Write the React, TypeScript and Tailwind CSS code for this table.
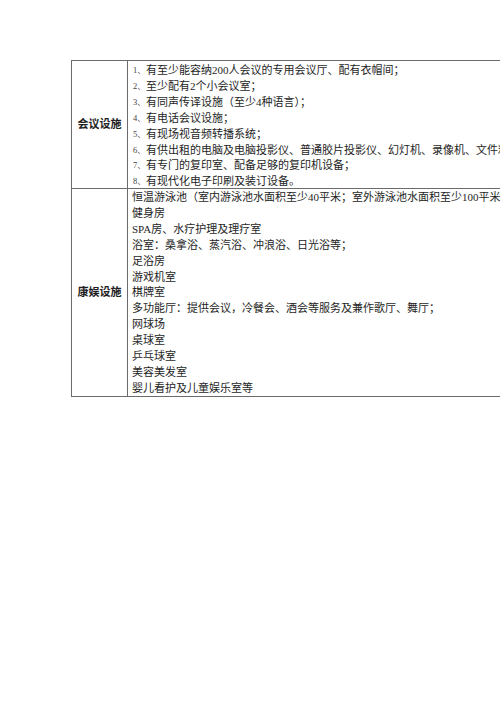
import React from 'react';

const meeting = [
  '有至少能容纳200人会议的专用会议厅、配有衣帽间；',
  '至少配有2个小会议室；',
  '有同声传译设施（至少4种语言）；',
  '有电话会议设施；',
  '有现场视音频转播系统；',
  '有供出租的电脑及电脑投影仪、普通胶片投影仪、幻灯机、录像机、文件粘贴设备；',
  '有专门的复印室、配备足够的复印机设备；',
  '有现代化电子印刷及装订设备。',
];

const leisure = [
  '恒温游泳池（室内游泳池水面积至少40平米；室外游泳池水面积至少100平米）',
  '健身房',
  'SPA房、水疗护理及理疗室',
  '浴室：桑拿浴、蒸汽浴、冲浪浴、日光浴等；',
  '足浴房',
  '游戏机室',
  '棋牌室',
  '多功能厅：提供会议，冷餐会、酒会等服务及兼作歌厅、舞厅；',
  '网球场',
  '桌球室',
  '乒乓球室',
  '美容美发室',
  '婴儿看护及儿童娱乐室等',
];

const font = { fontFamily: '"Liberation Serif", "Noto Sans CJK SC", serif' };

export default function App(): React.ReactNode {
  return (
    <div className="w-[500px] h-[708px] overflow-hidden bg-white pt-[60px] pl-[71px]" style={font}>
      <div className="w-[700px] border-t border-l border-b border-[#6b6b6b] text-[#1e1e1e]">
        {/* 会议设施 */}
        <div className="flex h-[128px] border-b border-[#6b6b6b]">
          <div className="w-[56px] shrink-0 border-r border-[#6b6b6b] flex items-center justify-center text-[11px] font-bold">
            会议设施
          </div>
          <div className="pl-[5px] pt-[2px] text-[11px] leading-[15.9px] whitespace-nowrap">
            {meeting.map((t, i) => (
              <div key={i} className="flex">
                <span className="w-[13px] text-[8.5px] text-[#444]">{i + 1}、</span>
                <span>{t}</span>
              </div>
            ))}
          </div>
        </div>
        {/* 康娱设施 */}
        <div className="flex h-[207px]">
          <div className="w-[56px] shrink-0 border-r border-[#6b6b6b] flex items-center justify-center text-[11px] font-bold">
            康娱设施
          </div>
          <div className="pl-[4px] pt-[1px] text-[11px] leading-[15.9px] whitespace-nowrap">
            {leisure.map((t, i) => (
              <div key={i}>{t}</div>
            ))}
          </div>
        </div>
      </div>
    </div>
  );
}
